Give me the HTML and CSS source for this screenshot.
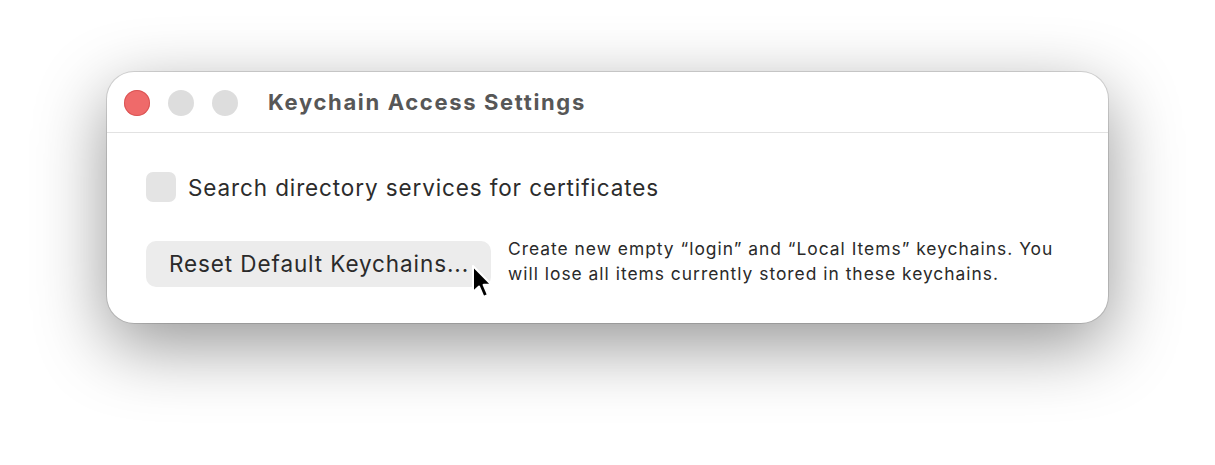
FILE: index.html
```html
<!DOCTYPE html>
<html>
<head>
<meta charset="utf-8">
<link rel="stylesheet" href="styles.css">
</head>
<body>
<div class="window">
  <div class="titlebar">
    <div class="lights">
      <span class="light red"></span>
      <span class="light"></span>
      <span class="light"></span>
    </div>
    <div class="title">Keychain Access Settings</div>
  </div>
  <div class="content">
    <label class="check-row">
      <span class="checkbox"></span>
      <span class="check-label">Search directory services for certificates</span>
    </label>
    <div class="reset-row">
      <div class="button">Reset Default Keychains...</div>
      <p class="desc">Create new empty “login” and “Local Items” keychains. You will lose all items currently stored in these keychains.</p>
    </div>
  </div>
  <svg class="cursor" width="24" height="36" viewBox="0 0 24 36">
    <path d="M2 1 L2 27 L8 21.5 L12.5 32 L17 30 L12.6 19.8 L20.5 19.8 Z" fill="#000" stroke="#fff" stroke-width="2" stroke-linejoin="round"/>
  </svg>
</div>
</body>
</html>
```

FILE: styles.css
```css
html, body {
  margin: 0;
  padding: 0;
  background: #ffffff;
}
body {
  min-height: 465px;
  box-sizing: border-box;
  padding: 72px 0 0 107px;
  font-family: Inter, "Liberation Sans", Arial, sans-serif;
}
.window {
  position: relative;
  width: 1001px;
  height: 251px;
  box-sizing: border-box;
  background: #fff;
  border-radius: 27px;
  box-shadow: 0 0 0 1px rgba(0,0,0,0.13), 0 22px 70px rgba(0,0,0,0.42);
}
.titlebar {
  height: 60px;
  border-bottom: 1px solid #e2e2e2;
  display: flex;
  align-items: center;
  padding-left: 17px;
}
.lights {
  display: flex;
  gap: 18px;
  margin-top: 1px;
}
.light {
  width: 26px;
  height: 26px;
  border-radius: 50%;
  background: #dddddd;
}
.light.red {
  background: #ef6a6a;
  box-shadow: inset 0 0 0 1px rgba(200,60,60,0.5);
}
.title {
  margin-left: 30px;
  font-size: 22px;
  font-weight: 700;
  color: #575757;
  letter-spacing: 1.65px;
}
.content {
  padding: 39px 39px 0 39px;
}
.check-row {
  display: flex;
  align-items: center;
  gap: 12px;
  height: 30px;
}
.checkbox {
  width: 30px;
  height: 30px;
  border-radius: 7px;
  background: #e4e4e4;
}
.check-label {
  font-size: 22.5px;
  letter-spacing: 0.88px;
  color: #2c2c2c;
}
.reset-row {
  display: flex;
  align-items: center;
  margin-top: 39px;
}
.button {
  flex: 0 0 345px;
  height: 46px;
  box-sizing: border-box;
  border-radius: 10px;
  background: #ececec;
  font-size: 22.5px;
  letter-spacing: 0.9px;
  color: #2a2a2a;
  display: flex;
  align-items: center;
  padding-left: 23px;
  padding-bottom: 1px;
  white-space: nowrap;
}
.desc {
  margin: -7px 0 0 17px;
  width: 570px;
  font-size: 17.4px;
  letter-spacing: 1.0px;
  line-height: 25px;
  color: #2a2a2a;
}
.cursor {
  position: absolute;
  left: 364px;
  top: 193px;
}
```
